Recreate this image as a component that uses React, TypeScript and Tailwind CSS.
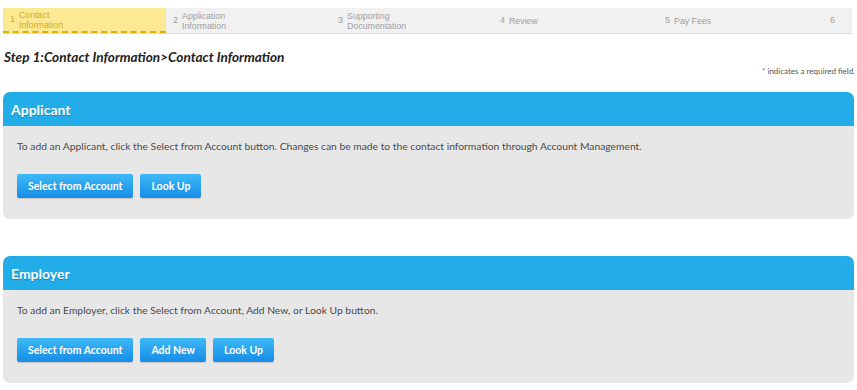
import React from "react";

const steps = [
  { n: "1", l1: "Contact", l2: "Information" },
  { n: "2", l1: "Application", l2: "Information" },
  { n: "3", l1: "Supporting", l2: "Documentation" },
  { n: "4", l1: "Review" },
  { n: "5", l1: "Pay Fees" },
  { n: "6", l1: "" },
];

function Btn({ children }: { children: React.ReactNode }) {
  return (
    <button className="h-[24px] px-[11px] rounded-[2px] bg-gradient-to-b from-[#3dbaf7] to-[#168ce6] text-white font-bold text-[10.5px] leading-none [font-family:Lato,sans-serif] shadow-[0_1px_1px_rgba(0,0,0,0.15)]">
      {children}
    </button>
  );
}

function Panel({ title, text, buttons }: { title: string; text: string; buttons: string[] }) {
  return (
    <div className="mx-[3px] rounded-[7px] overflow-hidden">
      <div className="h-[34px] bg-[#22ade8] flex items-center px-[8px]">
        <span className="text-white font-bold text-[14px] [font-family:Lato,sans-serif] [text-shadow:0_1px_1px_rgba(0,0,0,0.25)]">{title}</span>
      </div>
      <div className="bg-[#e7e7e7] h-[93px] px-[14px] pt-[13px]">
        <p className="text-[#4a4a4a] text-[10.3px] [font-family:Lato,sans-serif]">{text}</p>
        <div className="flex gap-[7px] mt-[20px]">
          {buttons.map((b) => (
            <Btn key={b}>{b}</Btn>
          ))}
        </div>
      </div>
    </div>
  );
}

export default function App() {
  return (
    <div className="w-[857px] h-[390px] bg-white overflow-hidden relative [font-family:'Liberation_Sans',Arial,sans-serif]">
      <div className="h-[8px]" />
      <div className="ml-[3px] mr-[5px] h-[26px] bg-[#f1f1f1] border-b border-[#dcdcdc] flex">
        {steps.map((s, i) => {
          const active = i === 0;
          return (
            <div
              key={s.n}
              className={
                active
                  ? "w-[163px] flex items-center bg-[#fde991] border-b-2 border-dashed border-[#d8b400] pl-[7px] text-[#cfae1c]"
                  : i === 5
                  ? "flex-1 flex items-center px-[4px] text-[#a0a0a0]"
                  : i < 3
                  ? "w-[165px] flex items-center pl-[7px] text-[#a0a0a0]"
                  : "w-[165px] flex items-center px-[4px] text-[#a0a0a0]"
              }
            >
              <span className="text-[9px] mr-[4px]">{s.n}</span>
              <span className="text-[8.8px] leading-[10px]">
                {s.l1}
                {s.l2 && <br />}
                {s.l2}
              </span>
            </div>
          );
        })}
      </div>
      <div className="px-[4px] pt-[15px]">
        <h1 className="italic font-bold text-[13.6px] leading-[16px] text-[#222] [font-family:Lato,sans-serif]">
          Step 1:Contact Information&gt;Contact Information
        </h1>
      </div>
      <div className="text-right pr-[2px] text-[8px] text-[#555] [font-family:Lato,sans-serif] mt-[0px]">
        <span className="text-[#e0442b]">* </span>indicates a required field.
      </div>
      <div className="mt-[15px]">
        <Panel
          title="Applicant"
          text="To add an Applicant, click the Select from Account button. Changes can be made to the contact information through Account Management."
          buttons={["Select from Account", "Look Up"]}
        />
      </div>
      <div className="mt-[37px]">
        <Panel
          title="Employer"
          text="To add an Employer, click the Select from Account, Add New, or Look Up button."
          buttons={["Select from Account", "Add New", "Look Up"]}
        />
      </div>
    </div>
  );
}
